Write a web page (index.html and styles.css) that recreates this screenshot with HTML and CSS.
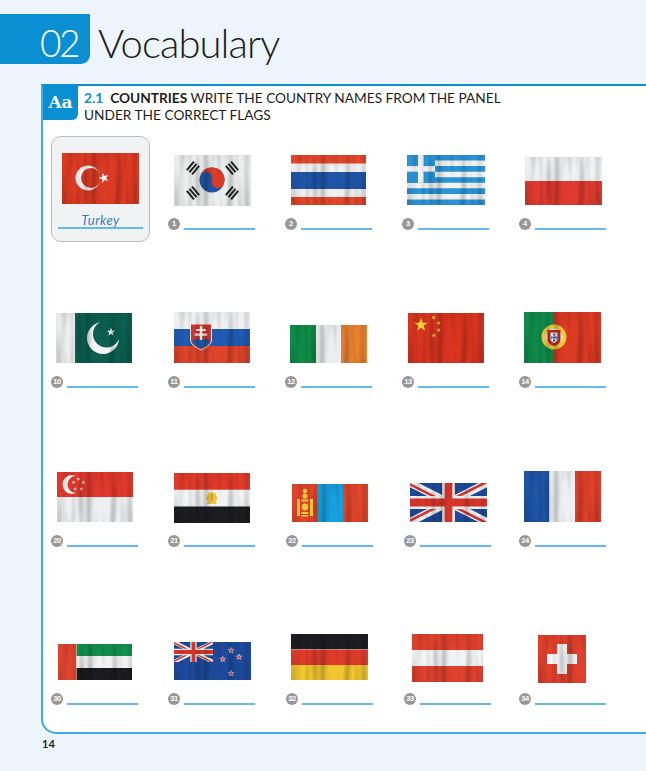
FILE: index.html
```html
<!DOCTYPE html>
<html lang="en">
<head>
    <meta charset="UTF-8">
    <meta name="viewport" content="width=device-width, initial-scale=1.0">
    <title>Vocabulary</title>
    <link rel="stylesheet" href="styles.css">
</head>
<body>
    <!-- shared cloth filter, stars and union jack -->
    <svg class="defs" width="0" height="0">
        <defs>
            <filter id="wave" x="-3%" y="-3%" width="106%" height="106%" color-interpolation-filters="sRGB">
                <feTurbulence type="fractalNoise" baseFrequency="0.17 0.018" numOctaves="1" seed="7" result="noise"/>
                <feDisplacementMap in="SourceGraphic" in2="noise" scale="1" xChannelSelector="R" yChannelSelector="G" result="moved"/>
                <feColorMatrix in="noise" type="matrix" values="0.55 0 0 0 0.66  0.55 0 0 0 0.66  0.55 0 0 0 0.66  0 0 0 0 1" result="shade"/>
                <feBlend in="moved" in2="shade" mode="multiply" result="lit"/>
                <feComposite in="lit" in2="moved" operator="in"/>
            </filter>
            <polygon id="star" points="0,-1 .24,-.31 .95,-.31 .38,.12 .59,.81 0,.4 -.59,.81 -.38,.12 -.95,-.31 -.24,-.31"/>
            <symbol id="union" viewBox="0 0 60 30" preserveAspectRatio="none">
                <rect width="60" height="30" fill="#1d4a98"/>
                <path d="M0 0L60 30M60 0L0 30" stroke="#f2f3f5" stroke-width="6"/>
                <path d="M0 0L30 15M60 30L30 15" stroke="#d8352a" stroke-width="2" transform="translate(0 1)"/>
                <path d="M60 0L30 15M0 30L30 15" stroke="#d8352a" stroke-width="2" transform="translate(0 -1)"/>
                <path d="M30 0V30M0 15H60" stroke="#f2f3f5" stroke-width="10"/>
                <path d="M30 0V30M0 15H60" stroke="#d8352a" stroke-width="6"/>
            </symbol>
        </defs>
    </svg>

    <header class="chapter">
        <div class="chapter-num">02</div>
        <h1 class="chapter-title">Vocabulary</h1>
    </header>

    <section class="panel">
        <div class="panel-head">
            <div class="aa-tab">Aa</div>
            <p class="task"><b class="task-num">2.1</b>&nbsp; <b>COUNTRIES</b> WRITE THE COUNTRY NAMES FROM THE PANEL<br>UNDER THE CORRECT FLAGS</p>
        </div>

        <div class="flags">
            <!-- row 1 -->
            <div class="cell example">
                <svg class="flag" width="77" height="51" viewBox="0 0 77 51"><g filter="url(#wave)">
                    <rect width="77" height="51" fill="#dc3a22"/>
                    <circle cx="26" cy="25" r="12.5" fill="#f5f5f3"/>
                    <circle cx="29" cy="25" r="10" fill="#dc3a22"/>
                    <use href="#star" transform="translate(42 25) rotate(-90) scale(5.5)" fill="#f5f5f3"/>
                </g></svg>
                <div class="example-answer">Turkey</div>
            </div>
            <div class="cell">
                <svg class="flag flag-down" width="77" height="51" viewBox="0 0 77 51"><g filter="url(#wave)">
                    <rect width="77" height="51" fill="#eceded"/>
                    <g fill="#222" transform="translate(19 13) rotate(-50)"><rect x="-5.5" y="-4.4" width="11" height="2"/><rect x="-5.5" y="-1" width="11" height="2"/><rect x="-5.5" y="2.4" width="11" height="2"/></g>
                    <g fill="#222" transform="translate(58 13) rotate(50)"><rect x="-5.5" y="-4.4" width="11" height="2"/><rect x="-5.5" y="-1" width="11" height="2"/><rect x="-5.5" y="2.4" width="11" height="2"/></g>
                    <g fill="#222" transform="translate(19 38) rotate(50)"><rect x="-5.5" y="-4.4" width="11" height="2"/><rect x="-5.5" y="-1" width="11" height="2"/><rect x="-5.5" y="2.4" width="11" height="2"/></g>
                    <g fill="#222" transform="translate(58 38) rotate(-50)"><rect x="-5.5" y="-4.4" width="11" height="2"/><rect x="-5.5" y="-1" width="11" height="2"/><rect x="-5.5" y="2.4" width="11" height="2"/></g>
                    <g transform="translate(38 25) rotate(18)">
                        <circle r="12.5" fill="#1f55a5"/>
                        <path d="M-12.5 0A12.5 12.5 0 0 1 12.5 0A6.25 6.25 0 0 1 0 0A6.25 6.25 0 0 0 -12.5 0Z" fill="#dc3c26"/>
                    </g>
                </g></svg>
                <div class="answer"><span class="num">1</span><span class="line"></span></div>
            </div>
            <div class="cell">
                <svg class="flag" width="75" height="50" viewBox="0 0 75 50"><g filter="url(#wave)">
                    <rect width="75" height="50" fill="#f0f0f0"/>
                    <rect width="75" height="8.5" fill="#e4472a"/>
                    <rect y="17" width="75" height="17" fill="#1f55a8"/>
                    <rect y="42" width="75" height="8" fill="#e4472a"/>
                </g></svg>
                <div class="answer"><span class="num">2</span><span class="line"></span></div>
            </div>
            <div class="cell">
                <svg class="flag flag-tight" width="78" height="50" viewBox="0 0 78 50"><g filter="url(#wave)">
                    <rect width="78" height="50" fill="#f2f3f5"/>
                    <path d="M0 2.8H78M0 13.9H78M0 25H78M0 36.1H78M0 47.2H78" stroke="#2a95d6" stroke-width="5.6"/>
                    <rect width="28" height="27.8" fill="#2a95d6"/>
                    <rect x="0" y="11.1" width="28" height="5.6" fill="#f2f3f5"/>
                    <rect x="11" y="0" width="5.6" height="27.8" fill="#f2f3f5"/>
                </g></svg>
                <div class="answer"><span class="num">3</span><span class="line"></span></div>
            </div>
            <div class="cell">
                <svg class="flag" width="77" height="48" viewBox="0 0 77 48"><g filter="url(#wave)">
                    <rect width="77" height="24" fill="#eef0f2"/>
                    <rect y="24" width="77" height="24" fill="#e03a2e"/>
                </g></svg>
                <div class="answer"><span class="num">4</span><span class="line"></span></div>
            </div>

            <!-- row 2 -->
            <div class="cell">
                <svg class="flag flag-tight" width="76" height="50" viewBox="0 0 76 50"><g filter="url(#wave)">
                    <rect width="19" height="50" fill="#eceded"/>
                    <rect x="19" width="57" height="50" fill="#0b5f50"/>
                    <circle cx="47" cy="25" r="16" fill="#f5f6f5"/>
                    <circle cx="50.5" cy="21" r="13.5" fill="#0b5f50"/>
                    <use href="#star" transform="translate(55 19) scale(4.4)" fill="#f5f6f5"/>
                </g></svg>
                <div class="answer"><span class="num">10</span><span class="line"></span></div>
            </div>
            <div class="cell">
                <svg class="flag" width="76" height="51" viewBox="0 0 76 51"><g filter="url(#wave)">
                    <rect width="76" height="17" fill="#f0f1f2"/>
                    <rect y="17" width="76" height="17" fill="#1f5bb0"/>
                    <rect y="34" width="76" height="17" fill="#e0442a"/>
                    <path d="M16.5 12H37.5V28C37.5 33 31 36 27 38C23 36 16.5 33 16.5 28Z" fill="#d8352a" stroke="#f5f5f5" stroke-width="1"/>
                    <path d="M18 30C20 26 22 27 24 28C25 25 29 25 30 28C32 27 34 26 36 30C34 33 30 35 27 37C24 35 20 33 18 30Z" fill="#1f5bb0"/>
                    <path d="M25.8 14H28.2V28H25.8ZM22 17H32V19H22ZM20.8 21.5H33.2V23.7H20.8Z" fill="#f5f5f5"/>
                </g></svg>
                <div class="answer"><span class="num">11</span><span class="line"></span></div>
            </div>
            <div class="cell">
                <svg class="flag flag-tight" width="77" height="38" viewBox="0 0 77 38"><g filter="url(#wave)">
                    <rect width="26" height="38" fill="#0e8c47"/>
                    <rect x="26" width="25" height="38" fill="#eceef2"/>
                    <rect x="51" width="26" height="38" fill="#e8812f"/>
                </g></svg>
                <div class="answer"><span class="num">12</span><span class="line"></span></div>
            </div>
            <div class="cell">
                <svg class="flag" width="76" height="50" viewBox="0 0 76 50"><g filter="url(#wave)">
                    <rect width="76" height="50" fill="#d8341f"/>
                    <g fill="#f7d52e">
                        <use href="#star" transform="translate(13 12) scale(7)"/>
                        <use href="#star" transform="translate(25.7 4.5) rotate(20) scale(2.4)"/>
                        <use href="#star" transform="translate(30.7 10) rotate(40) scale(2.4)"/>
                        <use href="#star" transform="translate(30.7 17) rotate(10) scale(2.4)"/>
                        <use href="#star" transform="translate(25.7 22.5) rotate(30) scale(2.4)"/>
                    </g>
                </g></svg>
                <div class="answer"><span class="num">13</span><span class="line"></span></div>
            </div>
            <div class="cell">
                <svg class="flag flag-tight" width="77" height="51" viewBox="0 0 77 51"><g filter="url(#wave)">
                    <rect width="77" height="51" fill="#dc3a22"/>
                    <rect width="30" height="51" fill="#0f8a4c"/>
                    <circle cx="30" cy="25" r="12.5" fill="#eecb3a"/>
                    <circle cx="30" cy="25" r="8.5" fill="#f4f4f4"/>
                    <path d="M23.5 18H36.5V28C36.5 31 33 33.5 30 34C27 33.5 23.5 31 23.5 28Z" fill="#c8261e"/>
                    <path d="M26.5 20.5H33.5V27C33.5 29 31.5 30.5 30 31C28.5 30.5 26.5 29 26.5 27Z" fill="#f5f5f5"/>
                    <g fill="#2a62b8"><rect x="29" y="21.5" width="2" height="2"/><rect x="29" y="24.5" width="2" height="2"/><rect x="29" y="27.5" width="2" height="2"/><rect x="27" y="24.5" width="1.6" height="2"/><rect x="31.4" y="24.5" width="1.6" height="2"/></g>
                </g></svg>
                <div class="answer"><span class="num">14</span><span class="line"></span></div>
            </div>

            <!-- row 3 -->
            <div class="cell">
                <svg class="flag" width="76" height="50" viewBox="0 0 76 50"><g filter="url(#wave)">
                    <rect width="76" height="25" fill="#e0392b"/>
                    <rect y="25" width="76" height="25" fill="#eeeff1"/>
                    <circle cx="15" cy="12.5" r="9.5" fill="#f7f7f7"/>
                    <circle cx="19" cy="12.5" r="8.5" fill="#e0392b"/>
                    <g fill="#f7f7f7">
                        <use href="#star" transform="translate(21.3 7) scale(2)"/>
                        <use href="#star" transform="translate(26.3 10.3) scale(2)"/>
                        <use href="#star" transform="translate(24.3 17) scale(2)"/>
                        <use href="#star" transform="translate(18 17) scale(2)"/>
                        <use href="#star" transform="translate(16.5 10.3) scale(2)"/>
                    </g>
                </g></svg>
                <div class="answer"><span class="num">20</span><span class="line"></span></div>
            </div>
            <div class="cell">
                <svg class="flag flag-down" width="76" height="50" viewBox="0 0 76 50"><g filter="url(#wave)">
                    <rect width="76" height="17" fill="#e03a28"/>
                    <rect y="16.7" width="76" height="17" fill="#f1f2f3"/>
                    <rect y="33.4" width="76" height="16.6" fill="#1c1c22"/>
                    <path d="M37.7 17.5L39 20L40.5 19L43.5 25L41.5 28.5L43 31H32.5L34 28.5L32 25L35 19L36.5 20Z" fill="#eec23e"/>
                    <rect x="37" y="21" width="1.4" height="7" fill="#d0901c"/>
                </g></svg>
                <div class="answer"><span class="num">21</span><span class="line"></span></div>
            </div>
            <div class="cell">
                <svg class="flag flag-far" width="76" height="38" viewBox="0 0 76 38"><g filter="url(#wave)">
                    <rect width="76" height="38" fill="#e0442a"/>
                    <rect x="25" width="26" height="38" fill="#16a0dd"/>
                    <g fill="#f2c93a">
                        <rect x="5" y="15" width="3" height="17"/>
                        <rect x="18" y="15" width="3" height="17"/>
                        <circle cx="13" cy="7" r="2.2"/>
                        <circle cx="13" cy="12" r="2.6"/>
                        <rect x="9.5" y="15.5" width="7" height="2"/>
                        <circle cx="13" cy="23" r="3.4"/>
                        <rect x="9.5" y="28" width="7" height="2"/>
                        <rect x="9.5" y="31" width="7" height="1.5"/>
                    </g>
                </g></svg>
                <div class="answer answer-nudge"><span class="num">22</span><span class="line"></span></div>
            </div>
            <div class="cell">
                <svg class="flag flag-uk" width="77" height="39" viewBox="0 0 77 39"><g filter="url(#wave)">
                    <use href="#union" width="77" height="39"/>
                </g></svg>
                <div class="answer answer-nudge-2"><span class="num">23</span><span class="line"></span></div>
            </div>
            <div class="cell">
                <svg class="flag flag-tight" width="77" height="51" viewBox="0 0 77 51"><g filter="url(#wave)">
                    <rect width="25.5" height="51" fill="#1d55a6"/>
                    <rect x="25.5" width="25.5" height="51" fill="#eff0f3"/>
                    <rect x="51" width="26" height="51" fill="#e0402a"/>
                </g></svg>
                <div class="answer"><span class="num">24</span><span class="line"></span></div>
            </div>

            <!-- row 4 -->
            <div class="cell">
                <svg class="flag flag-far" width="74" height="36" viewBox="0 0 74 36"><g filter="url(#wave)">
                    <rect width="18.5" height="36" fill="#e0442f"/>
                    <rect x="18.5" width="55.5" height="12" fill="#12914e"/>
                    <rect x="18.5" y="12" width="55.5" height="12" fill="#f2f2f2"/>
                    <rect x="18.5" y="24" width="55.5" height="12" fill="#1b1b20"/>
                </g></svg>
                <div class="answer"><span class="num">30</span><span class="line"></span></div>
            </div>
            <div class="cell">
                <svg class="flag" width="77" height="38" viewBox="0 0 77 38"><g filter="url(#wave)">
                    <rect width="77" height="38" fill="#1d4a9c"/>
                    <use href="#union" width="39" height="20"/>
                    <g fill="#dc3c34" stroke="#eee" stroke-width=".18">
                        <use href="#star" transform="translate(57 8.5) scale(3)"/>
                        <use href="#star" transform="translate(48.7 17.3) scale(3)"/>
                        <use href="#star" transform="translate(65 15) scale(3)"/>
                        <use href="#star" transform="translate(57 31.5) scale(3)"/>
                    </g>
                </g></svg>
                <div class="answer"><span class="num">31</span><span class="line"></span></div>
            </div>
            <div class="cell">
                <svg class="flag" width="77" height="46" viewBox="0 0 77 46"><g filter="url(#wave)">
                    <rect width="77" height="15.5" fill="#1e1e22"/>
                    <rect y="15.5" width="77" height="15.5" fill="#df3b2a"/>
                    <rect y="31" width="77" height="15" fill="#f2c62f"/>
                </g></svg>
                <div class="answer answer-nudge"><span class="num">32</span><span class="line"></span></div>
            </div>
            <div class="cell">
                <svg class="flag flag-at" width="71" height="48" viewBox="0 0 71 48"><g filter="url(#wave)">
                    <rect width="71" height="48" fill="#e0412d"/>
                    <rect y="16" width="71" height="16" fill="#f2f3f5"/>
                </g></svg>
                <div class="answer answer-nudge-2"><span class="num">33</span><span class="line"></span></div>
            </div>
            <div class="cell">
                <svg class="flag flag-ch" width="48" height="48" viewBox="0 0 48 48"><g filter="url(#wave)">
                    <rect width="48" height="48" fill="#e0402c"/>
                    <path d="M19 9H29V19H39V29H29V39H19V29H9V19H19Z" fill="#f4f5f6"/>
                </g></svg>
                <div class="answer"><span class="num">34</span><span class="line"></span></div>
            </div>
        </div>
    </section>

    <footer class="page-num">14</footer>
</body>
</html>
```

FILE: styles.css
```css
body {
    margin: 0;
    height: 771px;
    overflow: hidden;
    background: #eef4fc;
    font-family: 'Lato', 'Liberation Sans', sans-serif;
    color: #1d1d22;
}

.defs {
    display: block;
}

.chapter {
    display: flex;
    align-items: center;
    padding-top: 14px;
}

.chapter-num {
    width: 78px;
    height: 50px;
    padding-right: 12px;
    background: #0a8fd3;
    border-radius: 0 1px 9px 0;
    color: #fff;
    font-size: 37px;
    font-weight: 300;
    letter-spacing: -2.5px;
    line-height: 58px;
    text-align: right;
}

.chapter-title {
    margin: 0 0 0 8px;
    font-size: 40px;
    font-weight: 300;
    letter-spacing: -0.9px;
    line-height: 58px;
    height: 50px;
}

.panel {
    margin: 20px 0 0 41px;
    padding-bottom: 15px;
    background: #fff;
    border-top: 2px solid #0a8fd3;
    border-left: 2px solid #3faae6;
    border-bottom: 2px solid #3faae6;
    border-radius: 0 0 0 15px;
}

.panel-head {
    display: flex;
    height: 34px;
}

.aa-tab {
    width: 35px;
    height: 34px;
    background: #0a8fd3;
    border-radius: 0 0 6px 0;
    color: #fff;
    font-family: 'DejaVu Serif', serif;
    font-size: 17px;
    font-weight: bold;
    line-height: 33px;
    text-align: center;
}

.task {
    margin: 4px 0 0 6px;
    font-size: 13.7px;
    line-height: 16.5px;
}

.task-num {
    color: #0a8fd3;
}

.flags {
    display: grid;
    grid-template-columns: repeat(5, 117px);
    grid-template-rows: 106px repeat(3, 158.33px);
    margin: 16px 0 0 8px;
}

.cell {
    display: flex;
    flex-direction: column;
    justify-content: flex-end;
    padding-bottom: 12px;
    box-sizing: border-box;
}

.flag {
    display: block;
    margin-left: 6px;
}

.flag-tight {
    margin-left: 5px;
}

.flag-far {
    margin-left: 7px;
}

.flag-down {
    margin-bottom: -1px;
}

.flag-uk {
    margin-left: 8px;
}

.flag-at {
    margin-left: 10px;
    margin-bottom: -2px;
}

.flag-ch {
    margin-left: 19px;
    margin-bottom: -3px;
}

.example {
    width: 99px;
    padding: 0 6px 12px;
    background: #f1f2f4;
    border: 1.5px solid #b9bdc1;
    border-radius: 10px;
}

.example .flag {
    margin: 0 0 9px 4px;
}

.example-answer {
    border-bottom: 2px solid #62bbee;
    color: #2d7fc4;
    font-size: 13px;
    font-style: italic;
    letter-spacing: 0.5px;
    line-height: 14px;
    text-align: center;
}

.answer {
    display: flex;
    align-items: flex-end;
    gap: 4px;
    margin-top: 13px;
}

.answer-nudge {
    margin-left: 1px;
}

.answer-nudge-2 {
    margin-left: 2px;
}

.num {
    flex: none;
    width: 12px;
    height: 12px;
    border-radius: 50%;
    background: #979797;
    color: #fff;
    font-family: 'Liberation Sans', sans-serif;
    font-size: 7.5px;
    font-weight: bold;
    letter-spacing: -0.3px;
    line-height: 12px;
    text-align: center;
}

.line {
    width: 71px;
    border-bottom: 2px solid #62bbee;
}

.page-num {
    margin: 3px 0 0 42px;
    font-size: 11px;
    font-weight: bold;
    line-height: 14px;
}
```
